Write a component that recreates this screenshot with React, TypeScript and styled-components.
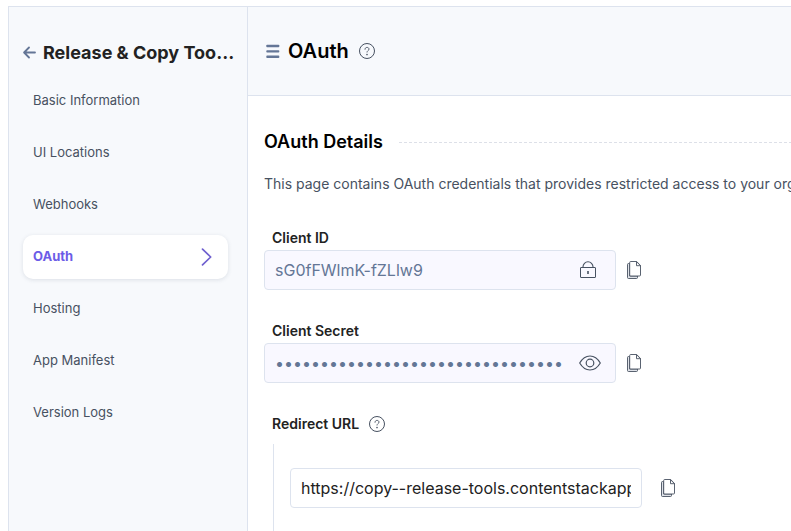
import React, { useState } from "react";
import styled, { createGlobalStyle } from "styled-components";

const GlobalStyle = createGlobalStyle`
  *, *::before, *::after { box-sizing: border-box; }
  html, body, #root { height: 100%; }
  body {
    margin: 0;
    overflow: hidden;
    background: #ffffff;
    color: #222222;
    font-family: Inter, "Liberation Sans", sans-serif;
    font-size: 14px;
  }
  button { border: 0; padding: 0; background: none; font: inherit; cursor: pointer; }
  h1, h2, p, ul { margin: 0; padding: 0; }
  svg { display: block; }
`;

const Shell = styled.div`
  display: flex;
  height: 100%;
  padding: 6px 0 0 8px;
`;

const Sidebar = styled.aside`
  flex: none;
  width: 240px;
  padding: 34px 19px 0 14px;
  background: #f7f9fc;
  border: solid #dde3ee;
  border-width: 1px 1px 0 1px;
`;

const AppTitle = styled.div`
  display: flex;
  align-items: center;
  gap: 7px;
  height: 24px;
  margin: 0 -12px 14px 0;
`;

const AppName = styled.h2`
  min-width: 0;
  overflow: hidden;
  white-space: nowrap;
  text-overflow: ellipsis;
  font-size: 18px;
  line-height: 24px;
  font-weight: 700;
`;

const NavList = styled.ul`
  display: flex;
  flex-direction: column;
  gap: 8px;
  list-style: none;
`;

const NavLink = styled.a<{ $active?: boolean }>`
  display: flex;
  align-items: center;
  justify-content: space-between;
  height: 44px;
  padding: 0 16px 2px 10px;
  border-radius: 10px;
  font-size: 13px;
  line-height: 20px;
  font-weight: ${(p) => (p.$active ? 700 : 400)};
  color: ${(p) => (p.$active ? "#6c5ce7" : "#475161")};
  background: ${(p) => (p.$active ? "#ffffff" : "transparent")};
  box-shadow: ${(p) => (p.$active ? "0 1px 4px rgba(60, 70, 100, 0.14)" : "none")};
  text-decoration: none;
`;

const Main = styled.main`
  flex: 1;
  min-width: 0;
`;

const PageHeader = styled.header`
  display: flex;
  align-items: center;
  height: 90px;
  padding: 0 18px;
  background: #f7f9fc;
  border: solid #dde3ee;
  border-width: 1px 0;
  color: #647696;
`;

const PageTitle = styled.h1`
  margin: 0 10px 0 8px;
  font-size: 20px;
  line-height: 28px;
  font-weight: 600;
  color: #000000;
`;

const Content = styled.div`
  padding: 34px 0 0 16px;
`;

const SectionHeading = styled.div`
  display: flex;
  align-items: center;
  gap: 16px;
  &::after {
    content: "";
    flex: 1;
    height: 1px;
    background: repeating-linear-gradient(90deg, #dde0e8 0 3px, transparent 3px 5px);
  }
`;

const SectionTitle = styled.h2`
  font-size: 18px;
  line-height: 24px;
  font-weight: 600;
  color: #000000;
`;

const Description = styled.p`
  margin: 20px 0 32px;
  overflow: hidden;
  white-space: nowrap;
  font-size: 14px;
  line-height: 20px;
  color: #475161;
`;

const Field = styled.div`
  margin-bottom: 29px;
`;

const LabelRow = styled.div`
  display: flex;
  align-items: center;
  gap: 10px;
  height: 24px;
  padding-left: 8px;
`;

const Label = styled.label`
  font-size: 14px;
  line-height: 24px;
  font-weight: 600;
`;

const Control = styled.div<{ $gap: number }>`
  display: flex;
  align-items: center;
  gap: ${(p) => p.$gap}px;
`;

const InputBox = styled.div<{ $locked?: boolean }>`
  display: flex;
  align-items: center;
  gap: 10px;
  width: 352px;
  height: 40px;
  padding: 0 ${(p) => (p.$locked ? 14 : 10)}px 0 10px;
  border: 1px solid #dde3ee;
  border-radius: 4px;
  background: ${(p) => (p.$locked ? "#f9f8ff" : "#ffffff")};
  color: ${(p) => (p.$locked ? "#647696" : "#222222")};
`;

const TextInput = styled.input`
  flex: 1;
  min-width: 0;
  height: 38px;
  padding: 0;
  border: 0;
  outline: 0;
  background: transparent;
  font: 400 16px/24px Inter, "Liberation Sans", sans-serif;
  color: inherit;
`;

const IconButton = styled.button<{ $muted?: boolean }>`
  flex: none;
  color: ${(p) => (p.$muted ? "#647696" : "#475161")};
`;

const UrlGroup = styled.div`
  margin: 8px 0 0 9px;
  padding: 24px 0 40px 16px;
  border-left: 1px solid #dde3ee;
`;

const HelpIcon = () => (
  <svg width="16" height="16" viewBox="0 0 16 16" fill="none" stroke="currentColor">
    <circle cx="8" cy="8" r="7.5" />
    <path d="M6 6.3C6 5.1 6.900 4.400 8 4.400s2 .7 2 1.700c0 1.400-2 1.500-2 3" strokeWidth=".9" strokeLinecap="round" />
    <circle cx="8" cy="11.600" r=".8" fill="currentColor" stroke="none" />
  </svg>
);

const BackIcon = () => (
  <svg width="13" height="14" viewBox="0 0 13 14" fill="none" stroke="currentColor" strokeWidth="1.800" strokeLinecap="round" strokeLinejoin="round">
    <path d="M12 6.500H1.200M6 1.500 1.100 6.500 6 11.500" />
  </svg>
);

const MenuIcon = () => (
  <svg width="14" height="14" viewBox="0 0 14 14" fill="currentColor">
    <rect x=".3" y=".8" width="13" height="2.400" rx=".8" />
    <rect x=".3" y="6.200" width="13" height="2.400" rx=".8" />
    <rect x=".3" y="11.600" width="13" height="2.400" rx=".8" />
  </svg>
);

const ChevronIcon = () => (
  <svg width="11" height="20" viewBox="0 0 11 20" fill="none" stroke="#6f60cf" strokeWidth="1.700" strokeLinecap="round" strokeLinejoin="round">
    <path d="M1.500 3.200 9.700 11 1.500 18.800" />
  </svg>
);

const LockIcon = () => (
  <svg width="22" height="18" viewBox="0 0 22 18" fill="none" stroke="currentColor" role="img" aria-label="Locked">
    <rect x="1.500" y="6.500" width="15" height="10" rx=".4" />
    <path d="M4 6.500V5.800a5 5 0 0 1 10 0v.7" strokeWidth="1.100" />
    <path d="M9 10v3" strokeWidth="1.600" />
  </svg>
);

const EyeIcon = () => (
  <svg width="22" height="16" viewBox="0 0 22 16" fill="none" stroke="currentColor" strokeWidth="1.200" strokeLinejoin="round">
    <path d="M.7 8C3.400 3.400 7 1 11 1s7.600 2.400 10.300 7c-2.700 4.600-6.300 7-10.300 7S3.400 12.600.7 8Z" />
    <circle cx="11" cy="8" r="3.800" />
  </svg>
);

const CopyIcon = () => (
  <svg width="14" height="18" viewBox="0 0 14 18" fill="none" stroke="currentColor" strokeLinejoin="round">
    <path d="M2.500 2.500h-1a1 1 0 0 0-1 1v13a1 1 0 0 0 1 1h8a1 1 0 0 0 1-1v-1.500h-8Z" fill="#dfe2e8" strokeWidth=".9" />
    <path d="M3.700.5h6l3.800 4v9.500a1 1 0 0 1-1 1H3.700a1 1 0 0 1-1-1V1.500a1 1 0 0 1 1-1Z" fill="#ffffff" strokeWidth=".9" />
    <path d="M9.500.7v4h4Z" fill="#ffffff" strokeWidth=".9" />
  </svg>
);

const pages = ["Basic Information", "UI Locations", "Webhooks", "OAuth", "Hosting", "App Manifest", "Version Logs"];

const CopyButton = ({ value, name }: { value: string; name: string }) => (
  <IconButton type="button" aria-label={`Copy ${name}`} onClick={() => navigator.clipboard?.writeText(value)}>
    <CopyIcon />
  </IconButton>
);

export default function App() {
  const [page, setPage] = useState("OAuth");
  const [revealed, setRevealed] = useState(false);
  const [url, setUrl] = useState("https://copy--release-tools.contentstackapps.com");
  const clientId = "sG0fFWlmK-fZLlw9";
  const secret = "x".repeat(32);

  return (
    <>
      <GlobalStyle />
      <Shell>
        <Sidebar>
          <AppTitle>
            <IconButton type="button" aria-label="Back" $muted>
              <BackIcon />
            </IconButton>
            <AppName>Release &amp; Copy Too…</AppName>
          </AppTitle>
          <nav>
            <NavList>
              {pages.map((name) => (
                <li key={name}>
                  <NavLink href="#" $active={name === page} onClick={() => setPage(name)}>
                    {name}
                    {name === page && <ChevronIcon />}
                  </NavLink>
                </li>
              ))}
            </NavList>
          </nav>
        </Sidebar>
        <Main>
          <PageHeader>
            <MenuIcon />
            <PageTitle>OAuth</PageTitle>
            <IconButton type="button" aria-label="About OAuth">
              <HelpIcon />
            </IconButton>
          </PageHeader>
          <Content>
            <SectionHeading>
              <SectionTitle>OAuth Details</SectionTitle>
            </SectionHeading>
            <Description>
              This page contains OAuth credentials that provides restricted access to your organization.
            </Description>
            <Field>
              <LabelRow>
                <Label htmlFor="client-id">Client ID</Label>
              </LabelRow>
              <Control $gap={11}>
                <InputBox $locked>
                  <TextInput id="client-id" value={clientId} readOnly />
                  <IconButton as="span">
                    <LockIcon />
                  </IconButton>
                </InputBox>
                <CopyButton value={clientId} name="client ID" />
              </Control>
            </Field>
            <Field>
              <LabelRow>
                <Label htmlFor="client-secret">Client Secret</Label>
              </LabelRow>
              <Control $gap={11}>
                <InputBox $locked>
                  <TextInput id="client-secret" type={revealed ? "text" : "password"} value={secret} readOnly />
                  <IconButton type="button" aria-label="Show client secret" onClick={() => setRevealed(!revealed)}>
                    <EyeIcon />
                  </IconButton>
                </InputBox>
                <CopyButton value={secret} name="client secret" />
              </Control>
            </Field>
            <LabelRow>
              <Label htmlFor="redirect-url">Redirect URL</Label>
              <IconButton type="button" aria-label="About redirect URL">
                <HelpIcon />
              </IconButton>
            </LabelRow>
            <UrlGroup>
              <Control $gap={19}>
                <InputBox>
                  <TextInput id="redirect-url" value={url} onChange={(e) => setUrl(e.target.value)} />
                </InputBox>
                <CopyButton value={url} name="redirect URL" />
              </Control>
            </UrlGroup>
          </Content>
        </Main>
      </Shell>
    </>
  );
}
